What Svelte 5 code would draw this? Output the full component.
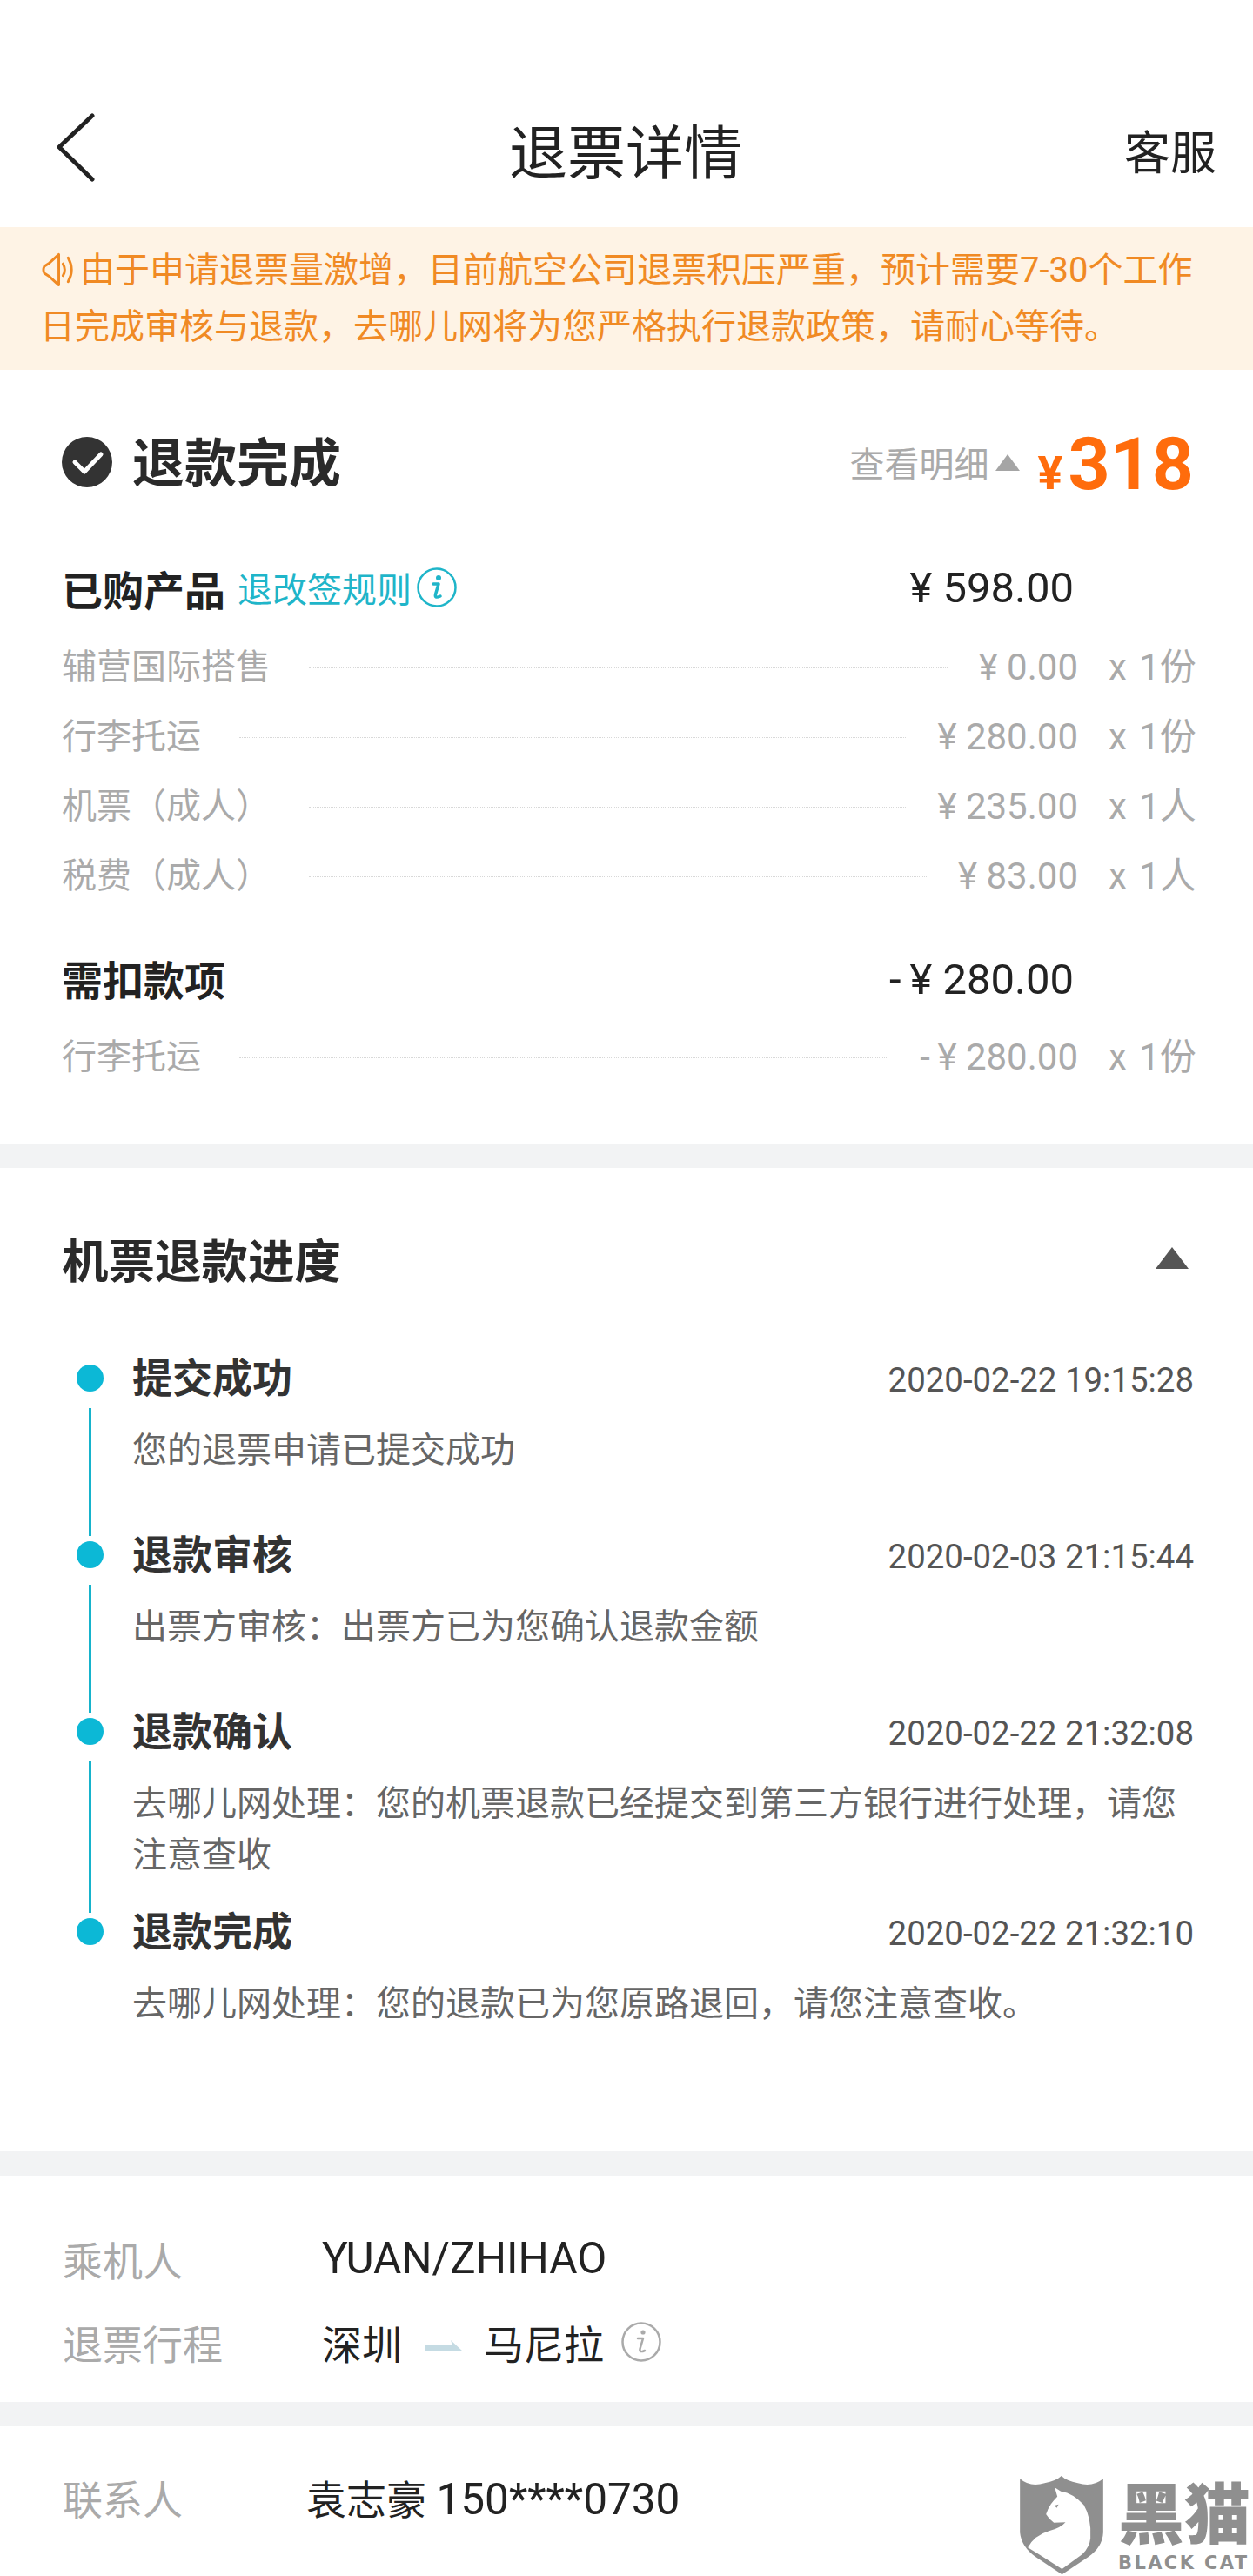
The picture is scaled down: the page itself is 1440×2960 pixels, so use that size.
<script>
  const bought = [
    { label: '辅营国际搭售', price: '¥ 0.00', qty: 'x 1份' },
    { label: '行李托运', price: '¥ 280.00', qty: 'x 1份' },
    { label: '机票（成人）', price: '¥ 235.00', qty: 'x 1人' },
    { label: '税费（成人）', price: '¥ 83.00', qty: 'x 1人' }
  ];

  const steps = [
    { title: '提交成功', time: '2020-02-22 19:15:28', desc: '您的退票申请已提交成功' },
    { title: '退款审核', time: '2020-02-03 21:15:44', desc: '出票方审核：出票方已为您确认退款金额' },
    { title: '退款确认', time: '2020-02-22 21:32:08', desc: '去哪儿网处理：您的机票退款已经提交到第三方银行进行处理，请您注意查收' },
    { title: '退款完成', time: '2020-02-22 21:32:10', desc: '去哪儿网处理：您的退款已为您原路退回，请您注意查收。' }
  ];
</script>

<div class="page">
  <header class="nav">
    <svg class="back" width="50" height="80" viewBox="0 0 50 80">
      <path d="M44 3 L6 39 L44 76" fill="none" stroke="#222" stroke-width="5" stroke-linecap="round" stroke-linejoin="round" />
    </svg>
    <h1>退票详情</h1>
    <span class="service">客服</span>
  </header>

  <div class="notice">
    <p>
      <svg class="horn" width="43" height="40" viewBox="0 0 44 40">
        <path d="M3 16 L9 12 L20 2 V38 L9 28 L3 24 Q1 20 3 16Z M25 13 Q29 20 25 27 M31 6 Q39 20 31 34" fill="none" stroke="#f08a24" stroke-width="3" stroke-linecap="round" stroke-linejoin="round" />
      </svg>由于申请退票量激增，目前航空公司退票积压严重，预计需要7-30个工作日完成审核与退款，去哪儿网将为您严格执行退款政策，请耐心等待。
    </p>
  </div>

  <section class="summary">
    <div class="status">
      <svg class="check" width="58" height="58" viewBox="0 0 58 58">
        <circle cx="29" cy="29" r="29" fill="#333" />
        <path d="M15 29 L26 40 L45 20" fill="none" stroke="#fff" stroke-width="5" stroke-linecap="round" stroke-linejoin="round" />
      </svg>
      <h2>退款完成</h2>
      <span class="detail">查看明细</span>
      <i class="tri small"></i>
      <span class="amount"><em>¥</em>318</span>
    </div>

    <div class="head-row first">
      <strong>已购产品</strong>
      <span class="rules">退改签规则</span>
      <svg class="info" width="46" height="46" viewBox="0 0 46 46">
        <circle cx="23" cy="23" r="21.5" fill="none" stroke="#1fb5c9" stroke-width="2.5" />
        <circle cx="25" cy="12" r="3" fill="#1fb5c9" />
        <path d="M19 19 H25 L21.5 31 Q20.5 36 27 33" fill="none" stroke="#1fb5c9" stroke-width="3.5" stroke-linecap="round" stroke-linejoin="round" />
      </svg>
      <span class="total">¥ 598.00</span>
    </div>
    {#each bought as row}
      <div class="row">
        <span>{row.label}</span>
        <i class="dots"></i>
        <span class="price">{row.price}</span>
        <span class="qty">{row.qty}</span>
      </div>
    {/each}

    <div class="head-row second">
      <strong>需扣款项</strong>
      <span class="total">-&thinsp;¥ 280.00</span>
    </div>
    <div class="row">
      <span>行李托运</span>
      <i class="dots"></i>
      <span class="price">-&thinsp;¥ 280.00</span>
      <span class="qty">x 1份</span>
    </div>
  </section>

  <section class="progress">
    <div class="progress-head">
      <h2>机票退款进度</h2>
      <i class="tri"></i>
    </div>
    <ul>
      {#each steps as step, i}
        <li>
          <div class="rail">
            <i class="dot"></i>
            {#if i < steps.length - 1}<i class="line"></i>{/if}
          </div>
          <div class="body">
            <div class="step-head">
              <strong>{step.title}</strong>
              <time>{step.time}</time>
            </div>
            <p>{step.desc}</p>
          </div>
        </li>
      {/each}
    </ul>
  </section>

  <section class="trip">
    <div class="kv"><span class="key">乘机人</span><span class="val latin">YUAN/ZHIHAO</span></div>
    <div class="kv">
      <span class="key">退票行程</span>
      <span class="val">深圳</span>
      <svg class="route" width="44" height="14" viewBox="0 0 44 14">
        <path d="M0 6 H32 L30 0 L44 13 H0Z" fill="#c5dbe3" />
      </svg>
      <span class="val">马尼拉</span>
      <svg class="info grey" width="46" height="46" viewBox="0 0 46 46">
        <circle cx="23" cy="23" r="21.5" fill="none" stroke="#aaa" stroke-width="2.5" />
        <circle cx="25" cy="12" r="2.6" fill="#aaa" />
        <path d="M19 19 H25 L21.5 31 Q20.5 36 27 33" fill="none" stroke="#aaa" stroke-width="2.5" stroke-linecap="round" stroke-linejoin="round" />
      </svg>
    </div>
  </section>

  <section class="contact">
    <div class="kv"><span class="key">联系人</span><span class="val tight">袁志豪 <span class="latin">150****0730</span></span></div>
    <div class="kv cut"><span class="key">邮箱</span></div>
  </section>

  <div class="mark">
    <svg width="97" height="114" viewBox="65 45 290 342">
      <path d="M65 55 Q100 85 150 70 Q190 62 208 45 Q225 62 265 70 Q315 85 352 55 V240 Q350 290 300 325 L210 385 L120 325 Q70 290 65 240Z" fill="#8f8f8f" />
      <path d="M185 85 L206 98 Q250 105 285 145 Q312 190 308 260 Q305 290 280 315 L210 366 L130 315 L92 292 Q115 250 165 235 Q205 225 222 205 L182 206 Q165 195 155 177 Q160 160 172 142 Q182 128 194 116Z" fill="#fff" />
      <path d="M184 147 L198 143 L192 155Z" fill="#8f8f8f" />
    </svg>
    <div class="mark-text">
      <b>黑猫</b>
      <span>BLACK CAT</span>
    </div>
  </div>
</div>

<style>
  :global(body) {
    margin: 0;
    background: #fff;
  }

  .page {
    position: relative;
    height: 2960px;
    overflow: hidden;
    background: #fff;
    color: #222;
    font-family: Roboto, 'Noto Sans CJK SC', sans-serif;
  }

  h1, h2, p, ul {
    margin: 0;
    padding: 0;
  }

  i, em {
    font-style: normal;
  }

  .nav {
    display: flex;
    align-items: center;
    justify-content: space-between;
    height: 261px;
    padding: 84px 42px 0 62px;
    box-sizing: border-box;
  }

  .back {
    margin-top: -5px;
  }

  .nav h1 {
    font-size: 67px;
    font-weight: 400;
    line-height: 90px;
    margin: 8px 0 0 34px;
  }

  .service {
    font-size: 53px;
    line-height: 80px;
    margin-top: 8px;
  }

  .notice {
    height: 164px;
    padding: 17px 46px 0;
    box-sizing: border-box;
    background: #fef3e5;
    color: #f08a24;
    font-size: 40px;
    line-height: 65px;
  }

  .horn {
    vertical-align: -6px;
    margin: 0 1px 0 2px;
  }

  .summary {
    height: 890px;
    padding: 74px 68px 0 71px;
    box-sizing: border-box;
  }

  .status {
    display: flex;
    align-items: center;
    height: 64px;
  }

  .status h2 {
    flex: 1;
    margin: -8px 0 0 23px;
    font-size: 60px;
    font-weight: 700;
    color: #2a2a2a;
  }

  .detail {
    font-size: 40px;
    color: #aaa;
  }

  .tri {
    width: 0;
    height: 0;
    border-left: 19px solid transparent;
    border-right: 19px solid transparent;
    border-bottom: 25px solid #555;
  }

  .tri.small {
    margin: 0 20px 0 8px;
    border-left-width: 14px;
    border-right-width: 14px;
    border-bottom: 19px solid #a5a5a5;
  }

  .amount {
    margin-top: 16px;
    font-size: 84px;
    font-weight: 700;
    line-height: 64px;
    color: #ff6c0c;
  }

  .amount em {
    font-size: 54px;
    margin-right: 6px;
  }

  .head-row {
    display: flex;
    align-items: center;
    height: 60px;
  }

  .head-row.first {
    margin-top: 82px;
    margin-bottom: 22px;
  }

  .head-row.second {
    margin-top: 46px;
    margin-bottom: 22px;
  }

  .head-row.second .total {
    padding-top: 4px;
  }

  .head-row strong {
    font-size: 47px;
    font-weight: 700;
  }

  .rules {
    margin-left: 14px;
    font-size: 40px;
    color: #1fb5c9;
  }

  .info {
    margin-left: 6px;
  }

  .total {
    margin-left: auto;
    margin-right: 138px;
    font-size: 49px;
    color: #222;
  }

  .row {
    display: flex;
    align-items: center;
    height: 80px;
    font-size: 40px;
    line-height: 44px;
    color: #aaa;
  }

  .dots {
    flex: 1;
    height: 0;
    margin: 0 36px 0 44px;
    border-top: 1px dotted #d8d8d8;
  }

  .price {
    font-size: 42px;
  }

  .qty {
    width: 98px;
    margin-left: 35px;
    font-size: 42px;
    word-spacing: 4px;
    white-space: nowrap;
  }

  .progress {
    border-top: 27px solid #f2f3f4;
    padding: 75px 68px 0 71px;
    height: 1055px;
  }

  .progress-head {
    display: flex;
    align-items: center;
    justify-content: space-between;
    height: 56px;
    padding-right: 6px;
  }

  .progress-head h2 {
    font-size: 53.5px;
    font-weight: 700;
    color: #2a2a2a;
  }

  ul {
    list-style: none;
    margin-top: 77px;
  }

  li {
    display: flex;
    min-height: 203px;
  }

  .rail {
    display: flex;
    flex-direction: column;
    align-items: center;
    width: 32px;
    margin: 0 33px 0 16px;
  }

  .dot {
    width: 31px;
    height: 31px;
    margin: 18px 0 19px;
    border-radius: 50%;
    background: #0cb8d6;
  }

  .line {
    flex: 1;
    width: 3px;
    margin-bottom: -12px;
    background: #16b3cc;
  }

  .body {
    flex: 1;
    min-width: 0;
  }

  .step-head {
    display: flex;
    align-items: center;
    justify-content: space-between;
    height: 60px;
  }

  .step-head strong {
    font-size: 46px;
    font-weight: 700;
    color: #333;
  }

  time {
    padding-top: 10px;
    font-size: 38.4px;
    color: #555;
  }

  .body p {
    margin-top: 27px;
    font-size: 40px;
    line-height: 59px;
    color: #666;
    padding-bottom: 25px;
  }

  .trip {
    border-top: 28px solid #f2f3f4;
    padding: 66px 0 0 72px;
    height: 194px;
  }

  .contact {
    border-top: 28px solid #f2f3f4;
    padding: 52px 0 0 72px;
  }

  .kv {
    display: flex;
    align-items: center;
    height: 58px;
    margin-bottom: 38px;
    font-size: 46px;
  }

  .key {
    width: 298px;
    color: #aaa;
  }

  .val {
    color: #222;
  }

  .latin {
    font-size: 49.5px;
  }

  .val.tight {
    margin-left: -18px;
  }

  .route {
    margin: 10px 24px 0 26px;
  }

  .info.grey {
    margin-left: 20px;
  }

  .kv.cut {
    margin-top: 52px;
  }

  .mark {
    position: absolute;
    left: 1172px;
    top: 2845px;
    display: flex;
    gap: 16px;
    color: #8f8f8f;
  }

  .mark-text {
    display: flex;
    flex-direction: column;
    line-height: 1;
  }

  .mark-text b {
    font-size: 76px;
    margin-top: 8px;
    white-space: nowrap;
    font-weight: 900;
  }

  .mark-text span {
    font-family: 'DejaVu Sans', sans-serif;
    font-size: 21px;
    font-weight: 700;
    letter-spacing: 2.4px;
    margin-top: 6px;
    white-space: nowrap;
  }
</style>
